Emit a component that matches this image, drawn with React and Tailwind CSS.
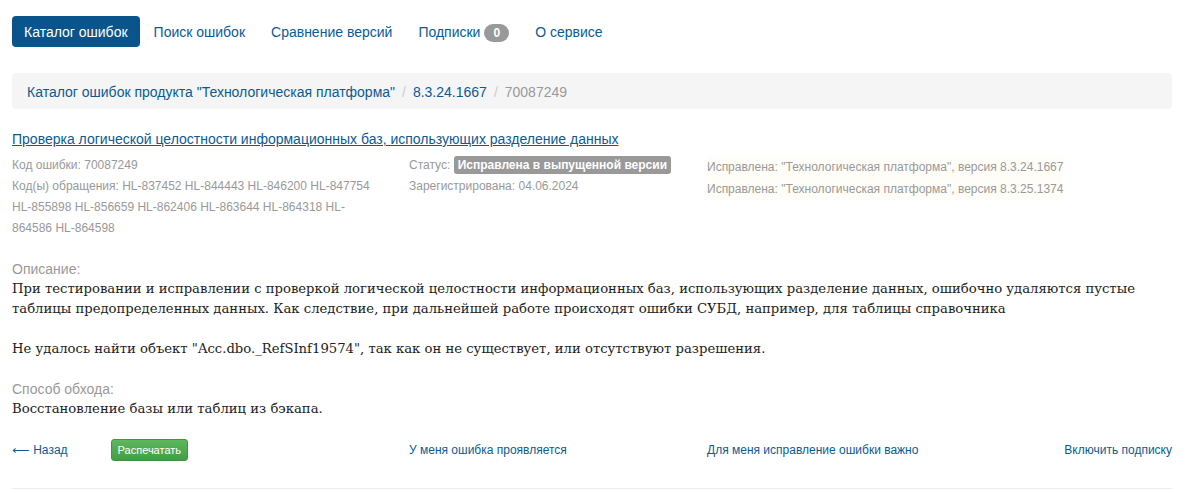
import React from "react";

const tabs = [
  { label: "Каталог ошибок", active: true },
  { label: "Поиск ошибок" },
  { label: "Сравнение версий" },
  { label: "Подписки", badge: "0" },
  { label: "О сервисе" },
];

const App = () => {
  return (
    <div className="min-h-screen bg-white pl-3 pr-5 pt-4 font-['Liberation_Sans',Arial,sans-serif] text-[14px] text-[#333]">
      {/* Tabs */}
      <nav className="flex items-center gap-[2px]">
        {tabs.map((t) => (
          <a
            key={t.label}
            href="#"
            className={`flex h-[31px] items-center rounded-[4px] px-3 pt-[2px] ${
              t.active ? "bg-[#09558b] text-white" : "text-[#0c5a94]"
            }`}
          >
            {t.label}
            {t.badge && (
              <span className="ml-1 rounded-[10px] bg-[#999] px-[9px] py-[2px] text-[12px] font-bold leading-[14px] text-white">
                {t.badge}
              </span>
            )}
          </a>
        ))}
      </nav>

      {/* Breadcrumb */}
      <div className="mt-[26px] flex h-[36px] items-center rounded-[4px] bg-[#f5f5f5] px-[15px] pt-[2px]">
        <a href="#" className="text-[#0c5a94]">Каталог ошибок продукта "Технологическая платформа"</a>
        <span className="px-[7px] text-[#ccc]">/</span>
        <a href="#" className="text-[#0c5a94]">8.3.24.1667</a>
        <span className="px-[7px] text-[#ccc]">/</span>
        <span className="text-[#999]">70087249</span>
      </div>

      {/* Title */}
      <div className="mt-5 leading-[20px]">
        <a href="#" className="text-[#0c5a94] underline">
          Проверка логической целостности информационных баз, использующих разделение данных
        </a>
      </div>

      {/* Meta */}
      <div className="mt-[6px] flex text-[12px] leading-[21px] text-[#999]">
        <div className="w-[397px] pr-[27px]">
          <div>Код ошибки: 70087249</div>
          <div>
            Код(ы) обращения: HL-837452 HL-844443 HL-846200 HL-847754 HL-855898 HL-856659 HL-862406 HL-863644 HL-864318 HL-864586 HL-864598
          </div>
        </div>
        <div className="w-[298px]">
          <div>
            Статус:{" "}
            <span className="rounded-[3px] bg-[#999] px-[4px] py-[2px] font-bold text-white">
              Исправлена в выпущенной версии
            </span>
          </div>
          <div>Зарегистрирована: 04.06.2024</div>
        </div>
        <div className="pt-[1px]">
          <div className="bg-[#fffdf7] leading-[22px]">
            <div>Исправлена: "Технологическая платформа", версия 8.3.24.1667</div>
            <div>Исправлена: "Технологическая платформа", версия 8.3.25.1374</div>
          </div>
        </div>
      </div>

      {/* Description */}
      <div className="mt-5 leading-[20px]">
        <div className="text-[#999]">Описание:</div>
        <div className="font-['DejaVu_Serif',serif] text-[13.2px] text-[#222]">
          При тестировании и исправлении с проверкой логической целостности информационных баз, использующих разделение данных, ошибочно удаляются пустые таблицы предопределенных данных. Как следствие, при дальнейшей работе происходят ошибки СУБД, например, для таблицы справочника
          <br />
          <br />
          Не удалось найти объект "Acc.dbo._RefSInf19574", так как он не существует, или отсутствуют разрешения.
        </div>
        <div className="mt-5 text-[#999]">Способ обхода:</div>
        <div className="font-['DejaVu_Serif',serif] text-[13.2px] text-[#222]">
          Восстановление базы или таблиц из бэкапа.
        </div>
      </div>

      {/* Actions */}
      <div className="mt-5 flex h-[22px] items-center text-[12px]">
        <div className="flex w-[397px] items-center">
          <a href="#" className="flex items-center text-[#0c5a94]">
            <span className="font-['DejaVu_Sans',sans-serif]">⟵</span>
            <span className="ml-[4px]">Назад</span>
          </a>
          <button className="ml-[43px] h-[22px] rounded-[3px] border border-[#3d963d] bg-gradient-to-b from-[#5cb85c] to-[#449d44] px-[6px] text-[11px] text-white">
            Распечатать
          </button>
        </div>
        <a href="#" className="w-[298px] text-[#0c5a94]">У меня ошибка проявляется</a>
        <a href="#" className="text-[#0c5a94]">Для меня исправление ошибки важно</a>
        <a href="#" className="ml-auto text-[#0c5a94]">Включить подписку</a>
      </div>

      <hr className="mt-[27px] border-t border-[#eee]" />
    </div>
  );
};

export default App;
